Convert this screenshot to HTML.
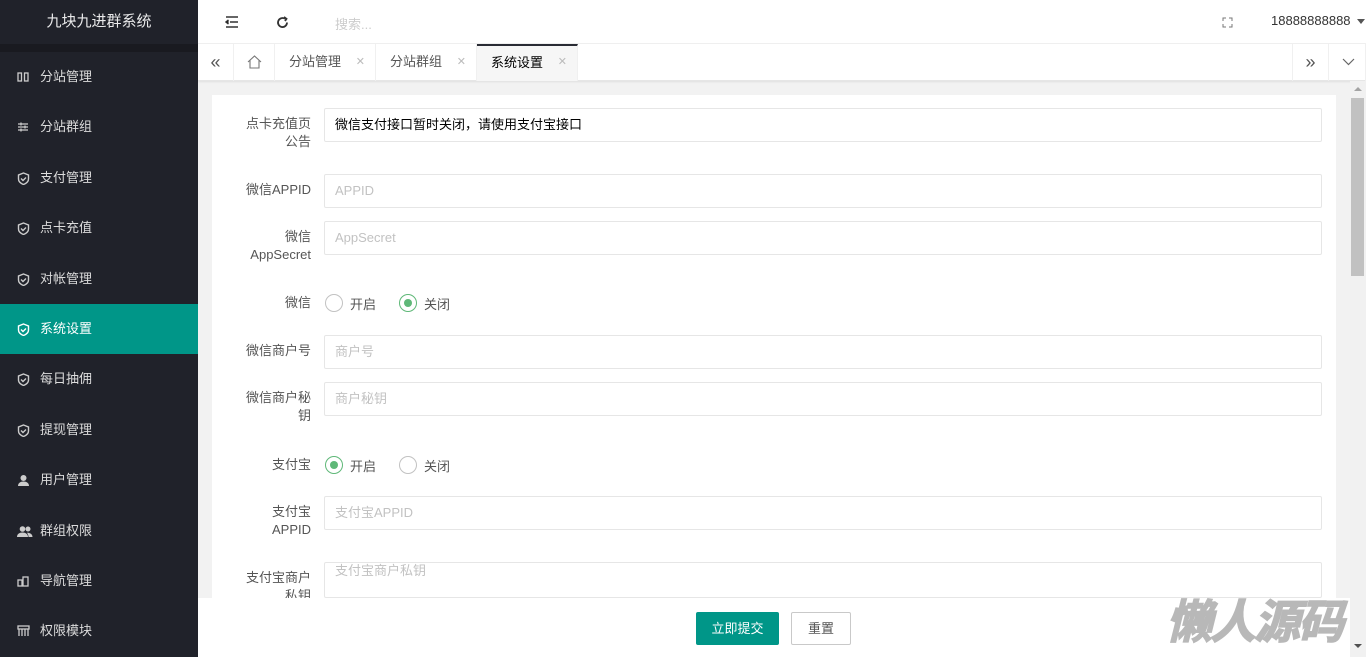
<!DOCTYPE html>
<html><head><meta charset="utf-8"><style>
*{margin:0;padding:0;box-sizing:border-box}
body{width:1366px;height:657px;overflow:hidden;position:relative;font-family:"Liberation Sans","Noto Sans CJK SC",sans-serif;font-size:13px;color:#333;background:#f2f2f2}
.side{position:absolute;left:0;top:0;width:198px;height:657px;background:#20222a}
.logo{height:44px;line-height:44px;text-align:center;color:#fff;font-size:15px;opacity:.9;background:#20222a}
.sep{height:8px;background:#191a20}
.mi{height:50.4px;line-height:50px;padding-left:40px;color:#dcdcdc;position:relative;font-size:13px}
.mi.act{background:#009688;color:#fff}
.mi svg{position:absolute;left:17px;top:19px}
.hdr{position:absolute;left:198px;top:0;right:0;height:44px;background:#fff;border-bottom:1px solid #f0f0f0}
.tabs{position:absolute;left:198px;top:44px;right:0;height:37px;background:#fff;border-bottom:1px solid #e6e6e6;box-shadow:0 1px 2px rgba(0,0,0,.08)}
.tab{position:absolute;top:0;height:37px;line-height:36px;border-right:1px solid #f0f0f0;color:#555;padding-left:14px}
.tab .x{position:absolute;right:10px;color:#bbb;font-size:11px}
.card{position:absolute;left:212px;top:95px;width:1124px;height:510px;background:#fff}
.lb{position:absolute;left:240px;width:71px;text-align:right;color:#555;line-height:18px}
.in{position:absolute;left:324px;width:998px;height:34px;border:1px solid #e6e6e6;border-radius:2px;line-height:32px;padding-left:10px;color:#c2c2c2;background:#fff}
.rd{position:absolute;width:18px;height:18px;border:1px solid #c2c2c2;border-radius:50%}
.rd.on{border-color:#5FB878}
.rd.on::after{content:"";position:absolute;left:4px;top:4px;width:8px;height:8px;border-radius:50%;background:#5FB878}
.rt{position:absolute;color:#555}
.bot{position:absolute;left:198px;top:598px;width:1152px;height:59px;background:#fff}
.sb{position:absolute;left:1350px;top:81px;width:16px;height:576px;background:#f1f1f1}
</style></head><body>
<div class="side">
<div class="logo">九块九进群系统</div><div class="sep"></div>
<div class="mi"><svg width="12" height="12" viewBox="0 0 12 12" fill="none" stroke="#ccc" stroke-width="1.3"><rect x="1" y="2" width="3.5" height="8"/><rect x="7.5" y="2" width="3.5" height="8"/></svg>分站管理</div>
<div class="mi"><svg width="12" height="12" viewBox="0 0 12 12" stroke="#ccc" stroke-width="1.3"><path d="M1 3h10M1 6h10M1 9h10M4 1.5v3M8 4.5v3M4 7.5v3"/></svg>分站群组</div>
<div class="mi"><svg width="13" height="13" viewBox="0 0 13 13" fill="none" stroke="#ccc" stroke-width="1.4"><path d="M6.5 1L11.5 3v4c0 3-2.5 4.5-5 5.5C4 11.5 1.5 10 1.5 7V3z"/><path d="M4 6.5l2 2 3-3"/></svg>支付管理</div>
<div class="mi"><svg width="13" height="13" viewBox="0 0 13 13" fill="none" stroke="#ccc" stroke-width="1.4"><path d="M6.5 1L11.5 3v4c0 3-2.5 4.5-5 5.5C4 11.5 1.5 10 1.5 7V3z"/><path d="M4 6.5l2 2 3-3"/></svg>点卡充值</div>
<div class="mi"><svg width="13" height="13" viewBox="0 0 13 13" fill="none" stroke="#ccc" stroke-width="1.4"><path d="M6.5 1L11.5 3v4c0 3-2.5 4.5-5 5.5C4 11.5 1.5 10 1.5 7V3z"/><path d="M4 6.5l2 2 3-3"/></svg>对帐管理</div>
<div class="mi act"><svg width="13" height="13" viewBox="0 0 13 13" fill="none" stroke="#fff" stroke-width="1.4"><path d="M6.5 1L11.5 3v4c0 3-2.5 4.5-5 5.5C4 11.5 1.5 10 1.5 7V3z"/><path d="M4 6.5l2 2 3-3"/></svg>系统设置</div>
<div class="mi"><svg width="13" height="13" viewBox="0 0 13 13" fill="none" stroke="#ccc" stroke-width="1.4"><path d="M6.5 1L11.5 3v4c0 3-2.5 4.5-5 5.5C4 11.5 1.5 10 1.5 7V3z"/><path d="M4 6.5l2 2 3-3"/></svg>每日抽佣</div>
<div class="mi"><svg width="13" height="13" viewBox="0 0 13 13" fill="none" stroke="#ccc" stroke-width="1.4"><path d="M6.5 1L11.5 3v4c0 3-2.5 4.5-5 5.5C4 11.5 1.5 10 1.5 7V3z"/><path d="M4 6.5l2 2 3-3"/></svg>提现管理</div>
<div class="mi"><svg width="13" height="13" viewBox="0 0 13 13" fill="#ccc"><circle cx="6.5" cy="4" r="3"/><path d="M1 12c0-3 2.5-4.5 5.5-4.5S12 9 12 12z"/></svg>用户管理</div>
<div class="mi"><svg width="16" height="13" viewBox="0 0 16 13" fill="#ccc"><circle cx="5.5" cy="4" r="2.8"/><circle cx="11" cy="4" r="2.5"/><path d="M0 12c0-3 2.5-4.5 5.5-4.5S11 9 11 12zM11.5 12c0-2-1-3.5-1.5-4.3 3 0 5.5 1.3 5.5 4.3z"/></svg>群组权限</div>
<div class="mi"><svg width="13" height="12" viewBox="0 0 13 12" fill="none" stroke="#ccc" stroke-width="1.3"><rect x="1" y="5" width="4" height="6"/><rect x="6" y="2" width="5" height="9"/></svg>导航管理</div>
<div class="mi"><svg width="13" height="12" viewBox="0 0 13 12" fill="none" stroke="#ccc" stroke-width="1.3"><rect x="1" y="1" width="11" height="3"/><path d="M2 4v7M5 4v7M8 4v7M11 4v7"/></svg>权限模块</div>
</div>
<div class="hdr">
<svg style="position:absolute;left:27px;top:16px" width="14" height="12" viewBox="0 0 14 12" stroke="#333" stroke-width="1.5"><path d="M1 1h12M5 6h8M1 11h12M3.5 4L1 6l2.5 2"/></svg>
<svg style="position:absolute;left:78px;top:16px" width="13" height="13" viewBox="0 0 13 13" fill="none" stroke="#333" stroke-width="1.8"><path d="M11 6.5A4.5 4.5 0 1 1 9 2.8"/><path d="M8 1l2.5 1.8L9 5" /></svg>
<span style="position:absolute;left:137px;top:14px;color:#ccc;font-size:13px">搜索...</span>
<svg style="position:absolute;left:1024px;top:17px" width="11" height="11" viewBox="0 0 11 11" fill="none" stroke="#777" stroke-width="1"><path d="M1 4V1h3M7 1h3v3M10 7v3H7M4 10H1V7"/></svg>
<span style="position:absolute;left:1073px;top:13px;color:#333;font-size:13px">18888888888</span>
<span style="position:absolute;left:1159px;top:19px;border:4px solid transparent;border-top:5px solid #555"></span>
</div>
<div class="tabs">
<div class="tab" style="left:0;width:36px;padding:0;text-align:center;font-size:18px;color:#555">«</div>
<div class="tab" style="left:36px;width:41px;padding:0"><svg style="position:absolute;left:13px;top:11px" width="15" height="14" viewBox="0 0 15 14" fill="none" stroke="#777" stroke-width="1.1"><path d="M1 7L7.5 1 14 7M3 5.5V13h9V5.5"/></svg></div>
<div class="tab" style="left:77px;width:101px">分站管理<span class="x">✕</span></div>
<div class="tab" style="left:178px;width:101px">分站群组<span class="x">✕</span></div>
<div class="tab" style="left:279px;width:101px;background:#f6f6f6;border-top:2px solid #292b34;line-height:33px;color:#000">系统设置<span class="x">✕</span></div>
<div class="tab" style="left:1094px;width:37px;border-left:1px solid #f0f0f0;padding:0;text-align:center;font-size:18px">»</div>
<div class="tab" style="left:1131px;width:37px;padding:0"><svg style="position:absolute;left:13px;top:14px" width="13" height="8" viewBox="0 0 13 8" fill="none" stroke="#666" stroke-width="1.2"><path d="M1 1l5.5 5.5L12 1"/></svg></div>
</div>
<div class="card"></div>
<div class="lb" style="top:115px">点卡充值页公告</div>
<div class="in" style="top:108px;color:#000">微信支付接口暂时关闭，请使用支付宝接口</div>
<div class="lb" style="top:181px">微信APPID</div>
<div class="in" style="top:174px">APPID</div>
<div class="lb" style="top:228px">微信AppSecret</div>
<div class="in" style="top:221px">AppSecret</div>
<div class="lb" style="top:294px">微信</div>
<div class="rd" style="left:325px;top:294px"></div><span class="rt" style="left:350px;top:294px">开启</span>
<div class="rd on" style="left:399px;top:294px"></div><span class="rt" style="left:424px;top:294px">关闭</span>
<div class="lb" style="top:342px">微信商户号</div>
<div class="in" style="top:335px">商户号</div>
<div class="lb" style="top:389px">微信商户秘钥</div>
<div class="in" style="top:382px">商户秘钥</div>
<div class="lb" style="top:456px">支付宝</div>
<div class="rd on" style="left:325px;top:456px"></div><span class="rt" style="left:350px;top:456px">开启</span>
<div class="rd" style="left:399px;top:456px"></div><span class="rt" style="left:424px;top:456px">关闭</span>
<div class="lb" style="top:503px">支付宝APPID</div>
<div class="in" style="top:496px">支付宝APPID</div>
<div class="lb" style="top:569px">支付宝商户私钥</div>
<div class="in" style="top:562px;height:36px;line-height:16px;padding-top:0">支付宝商户私钥</div>
<div class="bot">
<div style="position:absolute;left:498px;top:14px;width:83px;height:33px;background:#009688;color:#fff;line-height:33px;text-align:center;border-radius:2px">立即提交</div>
<div style="position:absolute;left:593px;top:14px;width:60px;height:33px;border:1px solid #c9c9c9;color:#555;line-height:31px;text-align:center;border-radius:2px">重置</div>
</div>
<div style="position:absolute;left:1166px;top:594px;font-size:46px;font-weight:bold;font-style:italic;color:#b8b8b8;letter-spacing:-2px;line-height:56px;-webkit-text-stroke:1.5px #b8b8b8">懒人源码</div>
<div class="sb"><div style="position:absolute;left:1px;top:17px;width:13px;height:178px;background:#c1c1c1"></div>
<span style="position:absolute;left:4px;top:6px;border:4px solid transparent;border-bottom:4px solid #a3a3a3;border-top:0"></span>
<span style="position:absolute;left:4px;top:563px;border:4px solid transparent;border-top:4px solid #505050;border-bottom:0"></span></div>
</body></html>
